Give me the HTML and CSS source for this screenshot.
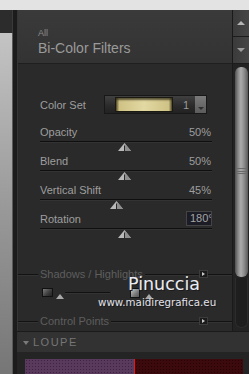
FILE: index.html
```html
<!DOCTYPE html>
<html>
<head>
<meta charset="utf-8">
<link rel="stylesheet" href="styles.css">
</head>
<body>
<div class="top"></div>
<div class="main">
  <div class="side"><div class="side-top"></div><div class="side-grey"></div></div>
  <div class="divider"></div>
  <div class="right">
    <div class="filter">
      <div class="panel">
        <div class="header">
          <div class="cat">All</div>
          <div class="title">Bi-Color Filters</div>
        </div>
        <div class="body">
          <div class="colorset">
            <span class="cs-label">Color Set</span>
            <div class="cs-widget">
              <div class="swatch"></div>
              <span class="cs-num">1</span>
              <div class="cs-drop"></div>
            </div>
          </div>
          <div class="slider">
            <div class="lbl"><span>Opacity</span><span>50%</span></div>
            <div class="track"></div>
            <svg class="thumb" style="margin-left:78px" width="13" height="8" viewBox="0 0 13 8"><polygon points="6.5,0 13,8 0,8" fill="#b9b9b9"/><polygon points="6.5,0 13,8 7,8" fill="#8e8e8e"/><line x1="6.5" y1="2.5" x2="6.5" y2="8" stroke="#2a2a2a" stroke-width="1"/></svg>
          </div>
          <div class="slider">
            <div class="lbl"><span>Blend</span><span>50%</span></div>
            <div class="track"></div>
            <svg class="thumb" style="margin-left:78px" width="13" height="8" viewBox="0 0 13 8"><polygon points="6.5,0 13,8 0,8" fill="#b9b9b9"/><polygon points="6.5,0 13,8 7,8" fill="#8e8e8e"/><line x1="6.5" y1="2.5" x2="6.5" y2="8" stroke="#2a2a2a" stroke-width="1"/></svg>
          </div>
          <div class="slider">
            <div class="lbl"><span>Vertical Shift</span><span>45%</span></div>
            <div class="track"></div>
            <svg class="thumb" style="margin-left:70px" width="13" height="8" viewBox="0 0 13 8"><polygon points="6.5,0 13,8 0,8" fill="#b9b9b9"/><polygon points="6.5,0 13,8 7,8" fill="#8e8e8e"/><line x1="6.5" y1="2.5" x2="6.5" y2="8" stroke="#2a2a2a" stroke-width="1"/></svg>
          </div>
          <div class="slider">
            <div class="lbl"><span>Rotation</span><span class="valbox">180°</span></div>
            <div class="track"></div>
            <svg class="thumb" style="margin-left:78px" width="13" height="8" viewBox="0 0 13 8"><polygon points="6.5,0 13,8 0,8" fill="#b9b9b9"/><polygon points="6.5,0 13,8 7,8" fill="#8e8e8e"/><line x1="6.5" y1="2.5" x2="6.5" y2="8" stroke="#2a2a2a" stroke-width="1"/></svg>
          </div>
          <div class="section sec-sh">
            <span class="sl sl-a"></span><span class="st">Shadows / Highlights</span><span class="sl sl-b"></span><span class="sbtn"></span><span class="sl sl-c"></span>
          </div>
          <div class="shrow">
            <span class="sq sq1"></span>
            <span class="tri"></span>
            <span class="shline"></span>
            <span class="sq sq2"></span>
            <span class="tri tri2"></span>
          </div>
          <div class="section sec-cp">
            <span class="sl sl-a"></span><span class="st">Control Points</span><span class="sl sl-b"></span><span class="sbtn"></span><span class="sl sl-c"></span>
          </div>
        </div>
      </div>
      <div class="scrollbar">
        <div class="sb-btn sb-up"><span class="arr-up"></span></div>
        <div class="sb-btn sb-down"><span class="arr-down"></span></div>
        <div class="sb-track">
          <div class="sb-thumb"><span class="grip"></span></div>
          <div class="sb-end"></div>
        </div>
      </div>
    </div>
    <div class="loupe-head"><span class="loupe-tri"></span><span class="loupe-text">LOUPE</span></div>
    <div class="loupe-img"><div class="lp-purple"></div><div class="lp-line"></div><div class="lp-red"></div></div>
  </div>
</div>
<div class="wm">
  <div class="wm-name">Pinuccia</div>
  <div class="wm-url">www.maidiregrafica.eu</div>
</div>
</body>
</html>
```
FILE: styles.css
```css
*{box-sizing:border-box;margin:0;padding:0}
html,body{width:249px;height:374px;overflow:hidden}
body{background:#e3e3e3;font-family:"Liberation Sans",Arial,sans-serif;font-size:11px;color:#9e9e9e;position:relative}
.top{height:10px;background:#e3e3e3}
.main{display:flex;height:364px}
.side{width:13px;display:flex;flex-direction:column}
.side-top{height:23px;background:#2c2c2c;border-right:1px solid #3a3a3a}
.side-grey{flex:1;background:linear-gradient(#c4c4c4,#9a9a9a 50%,#767676);border-right:1px solid #5a5a5a}
.divider{width:4px;background:#1c1c1c}
.right{flex:1;display:flex;flex-direction:column;background:#242424}
.filter{display:flex;height:321px}
.panel{flex:1;display:flex;flex-direction:column;background:#2a2a2a;border-left:1px solid #353535}
.header{height:54px;padding:18px 0 0 20px;background:linear-gradient(#3a3a3a,#333);border-bottom:1px solid #1f1f1f}
.cat{font-size:9px;line-height:10px;color:#8e8e8e}
.title{font-size:14px;line-height:16px;margin-top:2px;color:#9a9a9a}
.body{flex:1;padding:31px 20px 0 22px}
.colorset{display:flex;align-items:center;height:19px}
.cs-label{width:64px}
.cs-widget{width:103px;height:19px;border:1px solid #181818;background:linear-gradient(#404040,#2a2a2a 60%,#222);display:flex;align-items:center;padding-left:10px}
.swatch{width:58px;height:15px;border:1px solid #1a1a12;background:linear-gradient(to right,#5a5230,#cfc285 6%,#e2d8a2 50%,#cfc285 94%,#5a5230),#c8bb80;box-shadow:inset 0 2px 2px rgba(40,35,15,.7)}
.cs-num{margin-left:10px;color:#9a9a9a}
.cs-drop{margin-left:auto;width:11px;height:17px;background:linear-gradient(#7a7a7a,#5c5c5c);position:relative}
.cs-drop::after{content:"";position:absolute;left:3px;bottom:3px;border-left:3px solid transparent;border-right:3px solid transparent;border-top:3px solid #2e2e2e}
.colorset + .slider{margin-top:11px}
.slider{height:29px}
.lbl{display:flex;justify-content:space-between;align-items:center;height:14px;line-height:14px;padding-right:1px}
.track{margin-top:2px;height:1px;background:#0f0f0f;box-shadow:0 1px 0 #333}
.thumb{display:block;margin-top:1px}
.valbox{width:26px;height:15px;margin-right:-1px;margin-top:-1px;border:1px solid #444;background:#1c1c26;padding-left:3px;white-space:nowrap;overflow:hidden;line-height:13px;color:#a4a4a4}
.section{display:flex;align-items:center;height:14px;margin-left:-22px;margin-right:-20px;color:#5e5e5e}
.sec-sh{margin-top:26px}
.sec-cp{margin-top:14px}
.sl{height:1px;background:#121212;box-shadow:0 1px 0 #333}
.sl-a{width:20px}
.st{padding:0 2px;white-space:nowrap}
.sl-b{flex:1}
.sl-c{width:24px}
.sbtn{width:9px;height:8px;background:#1b1b1b;border:1px solid #3c3c3c;position:relative}
.sbtn::after{content:"";position:absolute;left:2px;top:1px;border-top:2px solid transparent;border-bottom:2px solid transparent;border-left:3px solid #c8c8c8}
.shrow{display:flex;align-items:flex-start;height:14px;margin-top:5px;padding-top:2px;position:relative}
.sq{display:block;border:1px solid #111}
.sq1{width:11px;height:9px;margin-left:2px;background:linear-gradient(135deg,#7a7a7a,#3a3a3a 60%,#222)}
.tri{width:0;height:0;margin-top:6px;margin-left:3px;border-left:4px solid transparent;border-right:4px solid transparent;border-bottom:5px solid #a8a8a8}
.shline{width:45px;height:1px;margin-top:4px;margin-left:1px;background:#111;box-shadow:0 1px 0 #333}
.sq2{width:10px;height:10px;margin-left:20px;background:linear-gradient(135deg,#c8c8c8,#777 60%,#555)}
.tri2{margin-left:5px}
.scrollbar{width:17px;display:flex;flex-direction:column;background:#232323;border-left:1px solid #1a1a1a}
.sb-btn{height:27px;background:linear-gradient(to right,#3b3b3b,#454545);border-bottom:1px solid #1c1c1c;display:flex;align-items:center;justify-content:center}
.sb-down{height:27px}
.arr-up{width:0;height:0;border-left:4px solid transparent;border-right:4px solid transparent;border-bottom:4px solid #b4b4b4}
.arr-down{width:0;height:0;border-left:4px solid transparent;border-right:4px solid transparent;border-top:4px solid #9c9c9c}
.sb-track{flex:1;padding:3px 1px 3px 2px;display:flex;flex-direction:column}
.sb-thumb{height:210px;width:13px;border-radius:6px;background:linear-gradient(to right,#505050,#8a8a8a 25%,#ababab 45%,#8c8c8c 70%,#5a5a5a);display:flex;align-items:center;justify-content:center;padding-bottom:2px}
.grip{width:9px;height:6px;border-top:1px solid #6a6a6a;border-bottom:1px solid #6a6a6a;position:relative}
.grip::after{content:"";position:absolute;left:0;right:0;top:2px;height:1px;background:#6a6a6a}
.sb-end{flex:1;margin-top:1px;border-radius:0 0 6px 6px;background:#1e1e1e;border:1px solid #2c2c2c;border-top:none}
.loupe-head{height:21px;background:#323232;border-top:1px solid #1b1b1b;display:flex;align-items:center;padding-left:6px;color:#767676}
.loupe-tri{width:0;height:0;border-left:3px solid transparent;border-right:3px solid transparent;border-top:4px solid #7a7a7a;margin-top:2px}
.loupe-text{margin-left:4px;font-size:11px;letter-spacing:1.5px;line-height:12px}
.loupe-img{display:flex;height:15px;margin:7px 6px 0 8px}
.lp-purple{width:109px;background:#5a3a5c radial-gradient(circle,#3e2444 0.8px,transparent 1px) 0 0/3px 3px}
.lp-line{width:1px;background:#e01818}
.lp-red{flex:1;background:#3c0a0c radial-gradient(circle,#240406 0.8px,transparent 1px) 0 0/3px 3px}
.wm{position:absolute;left:98px;top:275px;width:125px;font-family:"DejaVu Sans",sans-serif;color:#ececf4}
.wm-name{margin-left:30px;font-size:17.5px;line-height:18px;text-shadow:1px 1px 0 #1a1a1a,-1px 0 0 #333}
.wm-url{margin-top:3px;font-size:10.3px;line-height:12px;color:#e2e2ea;text-shadow:1px 1px 0 #1a1a1a}
```
